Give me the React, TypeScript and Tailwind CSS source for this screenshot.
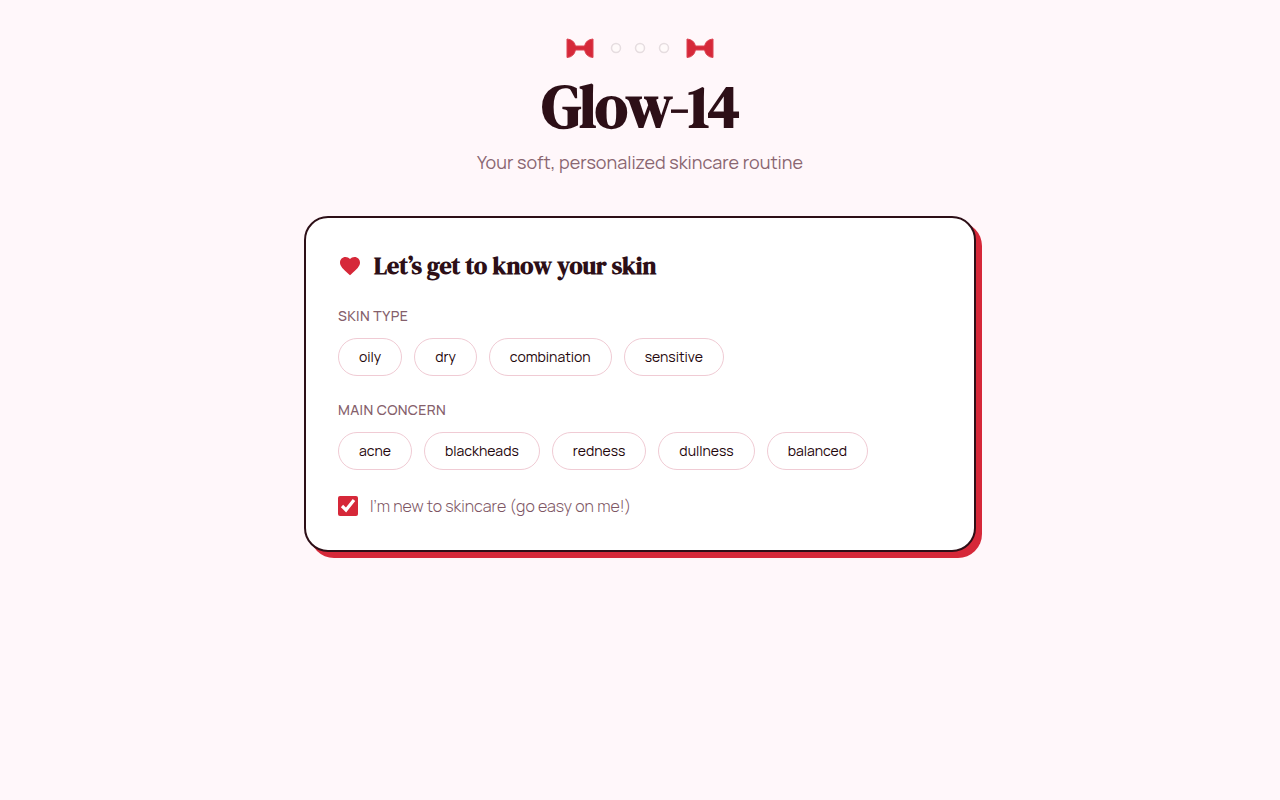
import { useState } from "react";

const skinTypes = ["oily", "dry", "combination", "sensitive"];
const concerns = ["acne", "blackheads", "redness", "dullness", "balanced"];

function Bow() {
    return (
        <svg viewBox="0 0 32 24" className="w-8 h-6 fill-[#d62839]" aria-hidden="true">
            <path d="M3 3 Q10 3.5 11.5 10 H20.5 Q22 3.5 29 3 V21.5 Q22 21 20.5 14 H11.5 Q10 21 3 21.5 Z" stroke="#dc4352" strokeWidth="1" />
        </svg>
    );
}

function Pearl() {
    return (
        <svg viewBox="0 0 16 16" className="size-4" aria-hidden="true">
            <circle cx="8" cy="8" r="4.5" fill="#fffafa" stroke="#e6dde0" strokeWidth="1.5" />
        </svg>
    );
}

interface OptionGroupProps {
    label: string;
    options: string[];
    selected: string;
    onSelect: (value: string) => void;
}

function OptionGroup({ label, options, selected, onSelect }: OptionGroupProps) {
    return (
        <div role="group" aria-label={label}>
            <p className="mb-3 text-sm font-medium uppercase tracking-wide text-[#85606b]">{label}</p>
            <div className="flex flex-wrap gap-3">
                {options.map((option) => (
                    <button
                        key={option}
                        type="button"
                        aria-pressed={selected === option}
                        onClick={() => onSelect(option)}
                        className={`rounded-full border border-[#f0cbd4] px-5 py-2 text-sm ${
                            selected === option ? "bg-[#d62839] text-white" : "bg-white text-[#1f060c]"
                        }`}
                    >
                        {option}
                    </button>
                ))}
            </div>
        </div>
    );
}

export default function App() {
    const [skinType, setSkinType] = useState("");
    const [concern, setConcern] = useState("");
    const [beginner, setBeginner] = useState(true);

    return (
        <div className="min-h-screen bg-[#fff7fa] px-4 py-9 font-['Manrope','Inter',sans-serif] text-[#2d0f17]">
            {/* Header */}
            <header className="mb-10 text-center">
                <div className="mb-4 flex items-center justify-center gap-3">
                    <Bow />
                    <div className="flex gap-2">
                        <Pearl />
                        <Pearl />
                        <Pearl />
                    </div>
                    <Bow />
                </div>
                <h1 className="mb-3 font-['DM_Serif_Display','Liberation_Serif',serif] text-6xl font-bold tracking-tight">
                    Glow-14
                </h1>
                <p className="text-lg text-[#8a6671]">Your soft, personalized skincare routine</p>
            </header>

            {/* Quiz card */}
            <main className="mx-auto max-w-2xl rounded-3xl border-2 border-[#2d0f17] bg-white p-8 shadow-[6px_6px_0_#d62839]">
                <div className="mb-6 flex items-center gap-3">
                    <svg viewBox="0 0 24 24" className="size-6 fill-[#d62839]" aria-hidden="true">
                        <path d="M12 21.35l-1.45-1.32C5.4 15.36 2 12.28 2 8.5 2 5.42 4.42 3 7.5 3c1.74 0 3.41.81 4.5 2.09C13.09 3.81 14.76 3 16.5 3 19.58 3 22 5.42 22 8.5c0 3.78-3.4 6.86-8.55 11.54L12 21.35z" />
                    </svg>
                    <h2 className="font-['DM_Serif_Display','Liberation_Serif',serif] text-2xl font-bold">
                        Let’s get to know your skin
                    </h2>
                </div>

                <div className="space-y-6">
                    <OptionGroup label="Skin type" options={skinTypes} selected={skinType} onSelect={setSkinType} />
                    <OptionGroup label="Main concern" options={concerns} selected={concern} onSelect={setConcern} />
                    <label className="flex items-center gap-3 font-light text-[#7d5563]">
                        <input
                            type="checkbox"
                            checked={beginner}
                            onChange={(e) => setBeginner(e.target.checked)}
                            className="size-5 accent-[#d62839]"
                        />
                        I’m new to skincare (go easy on me!)
                    </label>
                </div>
            </main>
        </div>
    );
}
